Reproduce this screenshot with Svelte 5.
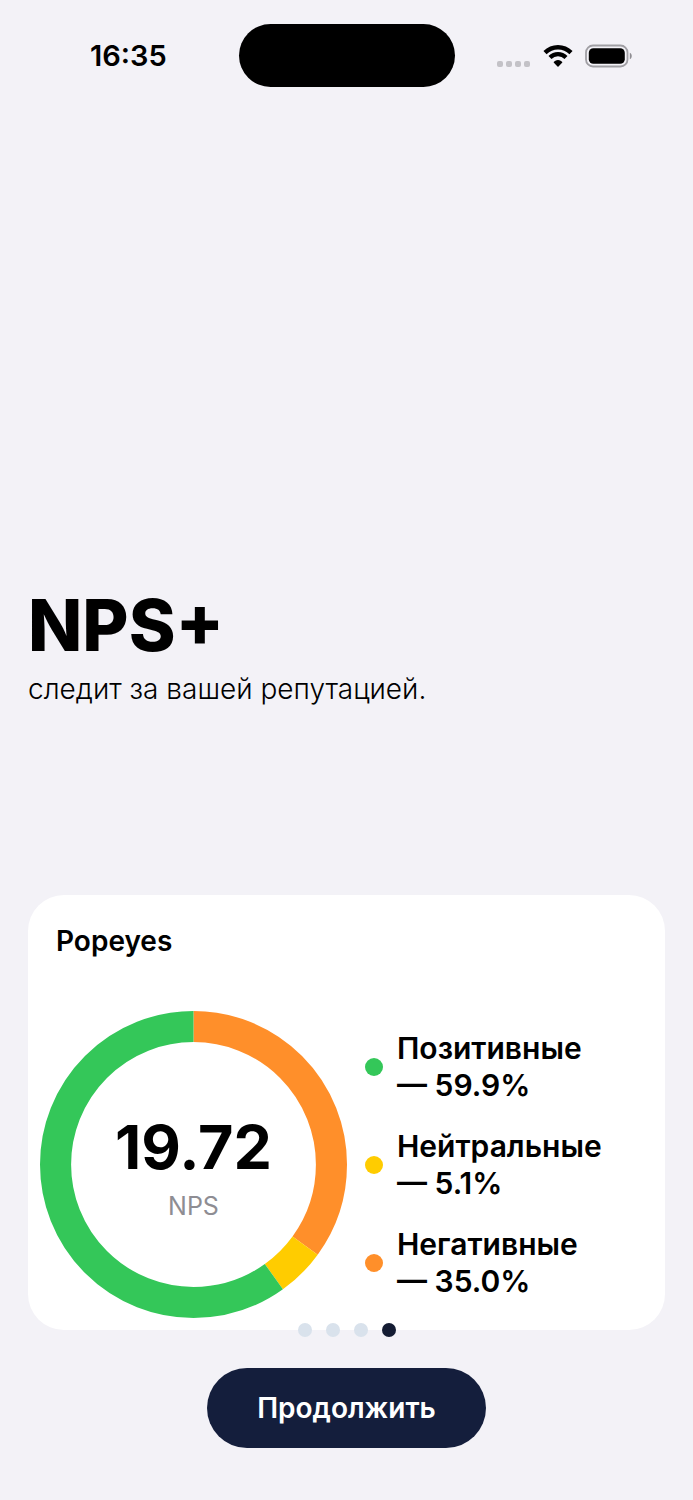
<script lang="ts">
    interface Segment {
        name: string;
        share: number;
        color: string;
    }

    const brand = 'Popeyes';
    const score = 19.72;

    const segments: Segment[] = [
        { name: 'Позитивные', share: 59.9, color: '#34c759' },
        { name: 'Нейтральные', share: 5.1, color: '#ffcc00' },
        { name: 'Негативные', share: 35.0, color: '#ff8f2a' },
    ];

    const pages = 4;
    let current = $state(3);

    // the ring starts at 12 o'clock and runs clockwise, negative first
    let arcs = $derived.by(() => {
        let start = 0;
        return [...segments].reverse().map((s) => {
            const arc = { ...s, start };
            start += s.share;
            return arc;
        });
    });

    const next = () => {
        current = (current + 1) % pages;
    };
</script>

<div class="screen">
    <header class="status">
        <time class="clock">16:35</time>
        <div class="island"></div>
        <div class="indicators">
            <svg width="34" height="24" viewBox="0 0 34 24" aria-hidden="true">
                {#each [0, 9, 18, 27] as x}
                    <rect {x} y="17" width="6" height="6" rx="2" fill="#c3c2c7" />
                {/each}
            </svg>
            <svg width="30" height="24" viewBox="0 0 30 24" fill="none" stroke="#000" stroke-linejoin="round" aria-hidden="true">
                <path d="M2 8.6 A18.4 18.4 0 0 1 28 8.6" stroke-width="4.4" />
                <path d="M7 13.5 A11.3 11.3 0 0 1 23 13.5" stroke-width="4.2" />
                <path d="M15 22 L11.4 18.2 A5.4 5.4 0 0 1 18.6 18.2 Z" fill="#000" stroke-width="1.4" />
            </svg>
            <svg width="47" height="24" viewBox="0 0 47 24" aria-hidden="true">
                <rect x="1" y="1.5" width="41.5" height="21" rx="7" fill="none" stroke="#a09fa4" stroke-width="1.8" />
                <rect x="3.8" y="4.2" width="36" height="15.6" rx="4.6" />
                <path d="M44.8 8.8 C47.4 9.8 47.4 14.2 44.8 15.2 Z" fill="#8f8e93" />
            </svg>
        </div>
    </header>

    <main>
        <section class="intro">
            <h1>NPS+</h1>
            <p>следит за вашей репутацией.</p>
        </section>

        <section class="card">
            <h2>{brand}</h2>
            <div class="stats">
                <div class="ring">
                    <svg viewBox="0 0 306 306" aria-hidden="true">
                        {#each arcs as arc}
                            <circle
                                cx="153"
                                cy="153"
                                r="137.5"
                                pathLength="100"
                                stroke={arc.color}
                                stroke-dasharray="{arc.share} {100 - arc.share}"
                                stroke-dashoffset={-arc.start}
                            />
                        {/each}
                    </svg>
                    <div class="score">
                        <strong>{score}</strong>
                        <span>NPS</span>
                    </div>
                </div>
                <ul class="legend">
                    {#each segments as s}
                        <li>
                            <i class="dot" style="background-color: {s.color}"></i>
                            <span>{s.name} —&nbsp;{s.share.toFixed(1)}%</span>
                        </li>
                    {/each}
                </ul>
            </div>
        </section>

        <nav class="pager">
            {#each { length: pages } as _, i}
                <button
                    class="page"
                    class:active={i === current}
                    aria-label="{i + 1}"
                    onclick={() => (current = i)}
                ></button>
            {/each}
        </nav>

        <button class="continue" onclick={next}>Продолжить</button>
    </main>
</div>

<style>
    :global(body) {
        margin: 0;
        background: #f3f2f7;
    }

    .screen {
        box-sizing: border-box;
        min-height: 100vh;
        display: flex;
        flex-direction: column;
        padding-bottom: 52px;
        font-family: Inter, 'Liberation Sans', sans-serif;
        color: #000;
    }

    .status {
        display: grid;
        grid-template-columns: 1fr 216px 1fr;
        align-items: center;
        justify-items: center;
        padding: 24px 18px 0;
    }

    .clock {
        font-size: 29px;
        font-weight: 600;
        line-height: 36px;
    }

    .island {
        width: 100%;
        height: 63px;
        border-radius: 32px;
        background: #000;
    }

    .indicators {
        display: flex;
        align-items: center;
        gap: 12px;
    }

    main {
        flex: 1;
        display: flex;
        flex-direction: column;
        padding: 0 28px;
    }

    .intro {
        flex: 1;
        display: flex;
        flex-direction: column;
        justify-content: flex-end;
        padding: 80px 0 188px;
    }

    h1,
    h2,
    p {
        margin: 0;
    }

    h1 {
        font-size: 71px;
        font-weight: 800;
        line-height: 84px;
    }

    p {
        margin-top: 4px;
        font-size: 28px;
        font-weight: 300;
        line-height: 36px;
    }

    .card {
        padding: 28px 12px 12px;
        border-radius: 36px;
        background: #fff;
    }

    h2 {
        margin-left: 16px;
        font-size: 28px;
        font-weight: 600;
        line-height: 36px;
    }

    .stats {
        display: flex;
        align-items: center;
        gap: 18px;
        margin-top: 52px;
    }

    .ring {
        flex: none;
        display: grid;
        place-items: center;
        width: 307px;
    }

    .ring > * {
        grid-area: 1 / 1;
    }

    .ring svg {
        display: block;
        width: 100%;
        transform: rotate(-90deg);
    }

    circle {
        fill: none;
        stroke-width: 31;
    }

    .score {
        display: flex;
        flex-direction: column;
        align-items: center;
        padding-top: 4px;
    }

    .score strong {
        font-size: 61px;
        font-weight: 700;
        line-height: 74px;
    }

    .score span {
        margin-top: 4px;
        font-size: 25px;
        line-height: 36px;
        color: #8e8d93;
    }

    .legend {
        display: flex;
        flex-direction: column;
        gap: 24px;
        margin: 0;
        padding: 0;
        list-style: none;
        font-size: 30px;
        font-weight: 600;
        line-height: 37px;
    }

    .legend li {
        display: flex;
        align-items: center;
        gap: 14px;
    }

    .dot {
        flex: none;
        width: 18px;
        height: 18px;
        border-radius: 50%;
    }

    /* the dots straddle the bottom edge of the card */
    .pager {
        display: flex;
        justify-content: center;
        gap: 14px;
        margin-top: -7px;
    }

    .page {
        width: 14px;
        height: 14px;
        padding: 0;
        border: none;
        border-radius: 50%;
        background: #d9e2ec;
        cursor: pointer;
    }

    .page.active {
        background: #141c33;
    }

    .continue {
        align-self: center;
        margin-top: 31px;
        padding: 22px 50px;
        border: none;
        border-radius: 40px;
        background: #141e3c;
        color: #fff;
        font-family: inherit;
        font-size: 28px;
        font-weight: 600;
        line-height: 36px;
        cursor: pointer;
    }
</style>
